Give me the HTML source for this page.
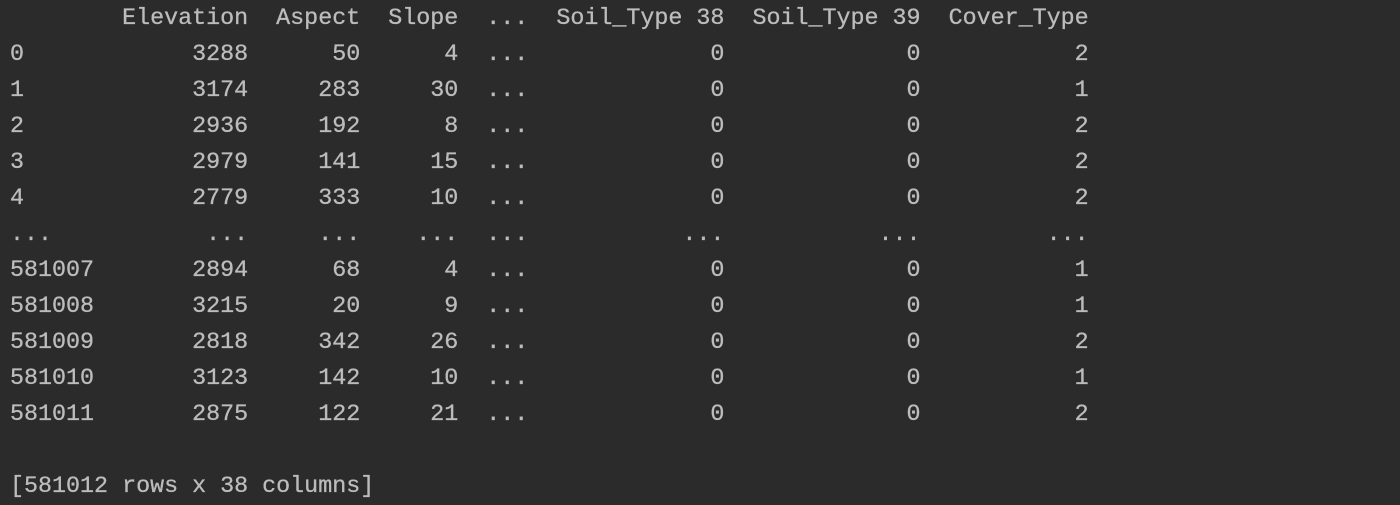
<!DOCTYPE html>
<html><head><style>
html,body{margin:0;padding:0;background:#2b2b2b;width:1400px;height:502px;overflow:hidden}
pre{margin:0;position:absolute;left:10px;top:1px;font-family:"Liberation Mono",monospace;font-size:23.35px;line-height:36px;color:#bcbcbc;-webkit-text-stroke:0.3px #bcbcbc}
</style></head><body><pre>        Elevation  Aspect  Slope  ...  Soil_Type 38  Soil_Type 39  Cover_Type
0            3288      50      4  ...             0             0           2
1            3174     283     30  ...             0             0           1
2            2936     192      8  ...             0             0           2
3            2979     141     15  ...             0             0           2
4            2779     333     10  ...             0             0           2
...           ...     ...    ...  ...           ...           ...         ...
581007       2894      68      4  ...             0             0           1
581008       3215      20      9  ...             0             0           1
581009       2818     342     26  ...             0             0           2
581010       3123     142     10  ...             0             0           1
581011       2875     122     21  ...             0             0           2

[581012 rows x 38 columns]</pre></body></html>
